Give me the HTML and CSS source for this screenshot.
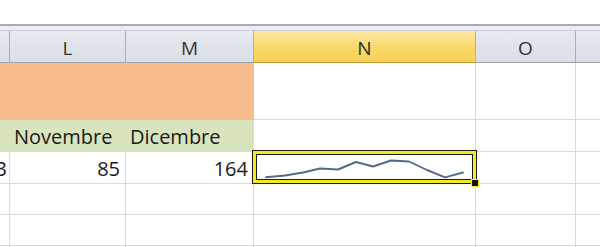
FILE: index.html
```html
<!DOCTYPE html>
<html>
<head>
<meta charset="utf-8">
<link rel="stylesheet" href="styles.css">
</head>
<body>
<div class="sheet">
  <div class="topspace"></div>
  <div class="topline"></div>
  <div class="band"></div>
  <div class="colheads">
    <div class="ch"></div>
    <div class="ch">L</div>
    <div class="ch">M</div>
    <div class="ch active">N</div>
    <div class="ch">O</div>
    <div class="ch last"></div>
  </div>
  <div class="grid">
    <div class="c orange span3"></div>
    <div class="c"></div>
    <div class="c"></div>
    <div class="c last"></div>

    <div class="c green"></div>
    <div class="c green txt">Novembre</div>
    <div class="c green txt">Dicembre</div>
    <div class="c"></div>
    <div class="c"></div>
    <div class="c last"></div>

    <div class="c num clip">3</div>
    <div class="c num">85</div>
    <div class="c num">164</div>
    <div class="c spark">
      <svg class="sparkline" width="222" height="32" viewBox="0 0 222 32">
        <polyline points="12,25.3 31,23.5 49,20.5 66,16.5 84,17.5 102,10 119,14.5 137,8.5 155,9.5 173,18 191,25.3 209,20.5" fill="none" stroke="#56688c" stroke-width="1.9" stroke-linejoin="round" stroke-linecap="round"/>
      </svg>
      <div class="selection"></div>
      <div class="handle"></div>
    </div>
    <div class="c"></div>
    <div class="c last"></div>

    <div class="c"></div><div class="c"></div><div class="c"></div><div class="c"></div><div class="c"></div><div class="c last"></div>
    <div class="c"></div><div class="c"></div><div class="c"></div><div class="c"></div><div class="c"></div><div class="c last"></div>
    <div class="c"></div><div class="c"></div><div class="c"></div><div class="c"></div><div class="c"></div><div class="c last"></div>
  </div>
</div>
</body>
</html>
```
FILE: styles.css
```css
html, body {
  margin: 0;
  padding: 0;
  background: #ffffff;
}
.sheet {
  width: 600px;
  height: 247px;
  overflow: hidden;
  font-family: "Open Sans", "Noto Sans", sans-serif;
}
.topspace {
  height: 24px;
  background: #ffffff;
}
.topline {
  height: 2px;
  background: #a9adb3;
}
.band {
  height: 4px;
  background: #eceef1;
  border-bottom: 1px solid #c9cdd3;
}
.colheads {
  display: grid;
  grid-template-columns: 10px 116px 128px 222px 100px 24px;
  height: 32px;
}
.ch {
  box-sizing: border-box;
  background: linear-gradient(#e6e9ee, #dadfe6);
  border-right: 1px solid #a9afb8;
  border-bottom: 1px solid #9ea4ad;
  color: #30353b;
  font-size: 19px;
  display: flex;
  align-items: center;
  justify-content: center;
  padding-top: 2px;
}
.ch.last { border-right: none; }
.ch.active {
  background: linear-gradient(#fde9a4, #f9d765 60%, #f8d05a);
  border-right: 1px solid #d9ae4a;
  border-bottom: 1px solid #c89a3a;
  border-left: 1px solid #d9ae4a;
  color: #26301c;
  margin-left: -1px;
}
.grid {
  display: grid;
  grid-template-columns: 10px 116px 128px 222px 100px 24px;
  grid-template-rows: 57px 32px 32px 31px 31px 20px;
}
.c {
  box-sizing: border-box;
  border-right: 1px solid #d9d9d9;
  border-bottom: 1px solid #d9d9d9;
  font-size: 20px;
  line-height: 1;
  color: #1a1a1a;
  display: flex;
  align-items: flex-end;
  padding: 0 4px 4px 4px;
  white-space: nowrap;
  overflow: hidden;
}
.c.last { border-right: none; }
.span3 { grid-column: span 3; }
.orange {
  background: #f8bd8e;
  border-color: #f8bd8e;
}
.green {
  background: #d8e4bd;
  border-color: #d8e4bd;
}
.txt { padding-left: 4px; }
.num {
  justify-content: flex-end;
  padding-right: 5px;
}
.clip { padding-right: 2px; padding-left: 0; }
.spark {
  position: relative;
  padding: 0;
  overflow: visible;
}
.sparkline {
  position: absolute;
  left: 0;
  top: 0;
}
.selection {
  position: absolute;
  left: -2px;
  top: -2px;
  right: -2px;
  bottom: -1px;
  border: 1px solid #1a1a1a;
  box-shadow: inset 0 0 0 3px #f0ec1e, inset 0 0 0 4px #1a1a1a;
}
.handle {
  position: absolute;
  right: -4px;
  bottom: -4px;
  width: 6px;
  height: 6px;
  background: #111111;
  border: 1px solid #f0ec1e;
  z-index: 2;
}
```
